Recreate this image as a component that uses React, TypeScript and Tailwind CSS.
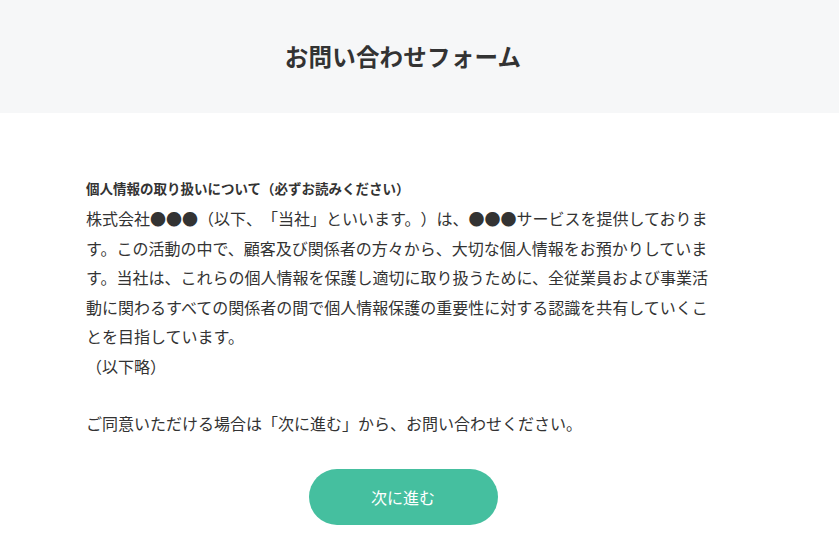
import React from 'react';

const font = { fontFamily: '"Noto Sans CJK JP", "Noto Sans", sans-serif' };

export default function App() {
  return (
    <div className="min-h-[537px] bg-white text-[#333333] [text-spacing-trim:space-all]" style={font}>
      <header className="h-[113px] bg-[#f6f7f8]">
        <div className="w-[806px] h-full flex items-center justify-center">
          <h1 className="text-[23.5px] font-bold tracking-[0.01em] text-[#333333]">お問い合わせフォーム</h1>
        </div>
      </header>
      <main className="w-[634px] ml-[86px] pt-[64px]">
        <h2 className="text-[13.5px] font-bold leading-[22px]">個人情報の取り扱いについて（必ずお読みください）</h2>
        <p className="mt-[5px] text-[16px] leading-[29.5px]">
          株式会社●●●（以下、「当社」といいます。）は、●●●サービスを提供しております。この活動の中で、顧客及び関係者の方々から、大切な個人情報をお預かりしています。当社は、これらの個人情報を保護し適切に取り扱うために、全従業員および事業活動に関わるすべての関係者の間で個人情報保護の重要性に対する認識を共有していくことを目指しています。
          <br />
          （以下略）
        </p>
        <p className="mt-[28px] text-[16px] leading-[29.5px]">
          ご同意いただける場合は「次に進む」から、お問い合わせください。
        </p>
      </main>
      <div className="w-[806px] flex justify-center mt-[30px]">
        <button className="w-[189px] h-[56px] rounded-full bg-[#45bf9f] text-white text-[16px]">次に進む</button>
      </div>
    </div>
  );
}
